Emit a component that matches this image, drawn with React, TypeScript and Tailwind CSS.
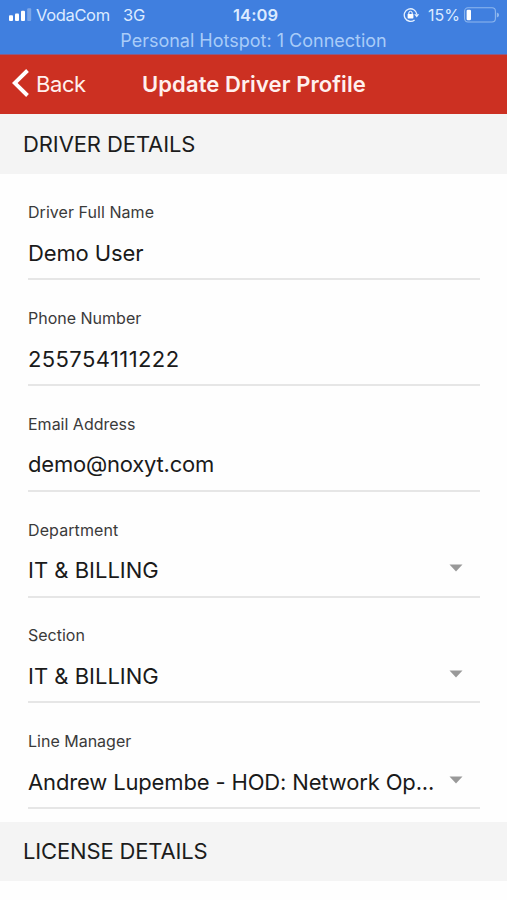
import { clsx } from "clsx";

type Field = {
  label: string;
  value: string;
  select?: boolean;
  labelClass?: string;
  valueClass?: string;
};

const fields: Field[] = [
  {
    label: "Driver Full Name",
    value: "Demo User",
    labelClass: "tracking-[0.05px]",
    valueClass: "tracking-[-0.12px]",
  },
  {
    label: "Phone Number",
    value: "255754111222",
    valueClass: "tracking-[0.4px]",
  },
  {
    label: "Email Address",
    value: "demo@noxyt.com",
    valueClass: "tracking-[-0.2px]",
  },
  {
    label: "Department",
    value: "IT & BILLING",
    select: true,
    labelClass: "tracking-[0.1px]",
  },
  { label: "Section", value: "IT & BILLING", select: true },
  {
    label: "Line Manager",
    value: "Andrew Lupembe - HOD: Network Op...",
    select: true,
    valueClass: "tracking-[-0.15px]",
  },
];

const SignalIcon = () => (
  <svg width="24" height="14" viewBox="0 0 24 14" fill="#fff">
    <rect x="0" y="7.2" width="4" height="5.8" rx="1" />
    <rect x="6" y="5.4" width="4" height="7.6" rx="1" />
    <rect x="12" y="2.8" width="4" height="10.2" rx="1" />
    <rect x="18.2" y="0.3" width="4" height="12.7" rx="1" opacity="0.3" />
  </svg>
);

const RotationLockIcon = () => (
  <svg width="17" height="16" viewBox="0 0 17 16" fill="none">
    <path
      d="M11.6 12.9A6.3 6.3 0 1 1 13.8 7.2"
      stroke="#e4f0ff"
      strokeWidth="1.3"
    />
    <path d="M11.2 7.2h5l-2.5 3.2z" fill="#e4f0ff" />
    <rect x="4.6" y="7" width="5.8" height="4.4" rx="0.6" fill="#fff" />
    <path d="M5.8 7.2V6a1.7 1.7 0 0 1 3.4 0v1.2" stroke="#fff" />
  </svg>
);

const BatteryIcon = () => (
  <svg width="36" height="16" viewBox="0 0 36 16" fill="none">
    <rect
      x="0.6"
      y="0.8"
      width="30.8"
      height="14.2"
      rx="3.4"
      stroke="#8fb8ee"
      strokeWidth="1.1"
    />
    <rect x="2.6" y="2.8" width="4.4" height="10.4" rx="1.2" fill="#fff" />
    <path d="M32.8 5.4c1.6.4 2.2 1.2 2.2 2.5s-.6 2.1-2.2 2.5z" fill="#8fb8ee" />
  </svg>
);

const StatusBar = () => (
  <div className="h-[55px] shrink-0 bg-[#407fdf] border-b border-[#8b5a85] text-[#dcebff]">
    <div className="flex h-[30px] items-center">
      <div className="flex w-[233px] items-center pl-[9px]">
        <SignalIcon />
        <span className="ml-[3px] w-[87px] text-[16.5px] tracking-[-0.35px]">
          VodaCom
        </span>
        <span className="text-[16.5px] tracking-[-0.3px]">3G</span>
      </div>
      <span className="w-[170px] text-[16.5px] font-semibold tracking-[0.1px]">
        14:09
      </span>
      <RotationLockIcon />
      <span className="ml-2 w-[36px] text-[16px]">15%</span>
      <BatteryIcon />
    </div>
    <p className="text-center text-[18px] leading-[22px] text-[#a9ccf8]">
      Personal Hotspot: 1 Connection
    </p>
  </div>
);

const Header = () => (
  <header className="flex h-[59px] shrink-0 items-center bg-[#cc3022] text-[#fff0ee]">
    <button className="flex w-[142px] items-center pl-3">
      <svg
        width="17"
        height="28"
        viewBox="0 0 17 28"
        fill="none"
        className="-mt-[3px]"
      >
        <path d="M15.5 1.5 2.7 14l12.8 12.5" stroke="#fff" strokeWidth="3.9" />
      </svg>
      <span className="ml-[7px] text-[22px] tracking-[-0.4px]">Back</span>
    </button>
    <h1 className="text-[22px] font-semibold tracking-[0.1px] whitespace-nowrap">
      Update Driver Profile
    </h1>
  </header>
);

const SectionTitle: React.FC<{ title: string; className?: string }> = ({
  title,
  className,
}) => (
  <h2
    className={clsx(
      "flex shrink-0 items-center bg-[#f4f4f4] pl-[23px] text-[22px] text-[#1c1c1c]",
      className,
    )}
  >
    {title}
  </h2>
);

const FormField: React.FC<{ field: Field }> = ({ field }) => (
  <div className="mr-[27px] ml-7 h-[105.8px] shrink-0 border-b-2 border-[#e6e6e6] pt-[27.8px]">
    <p
      className={clsx(
        "h-5 text-[16px] leading-5 text-[#3a3a3a]",
        field.labelClass,
      )}
    >
      {field.label}
    </p>
    <div className="mt-[17.2px] flex h-7 items-center justify-between pr-[17px]">
      <span
        className={clsx(
          "text-[22px] whitespace-nowrap text-[#1a1a1a]",
          field.valueClass,
        )}
      >
        {field.value}
      </span>
      {field.select && (
        <svg
          width="14"
          height="8"
          viewBox="0 0 14 8"
          className="-mt-[5px] shrink-0"
        >
          <path d="M0.5 0.5h13L7 7.5z" fill="#999" />
        </svg>
      )}
    </div>
  </div>
);

export default function App() {
  return (
    <div className="flex h-[900px] w-[507px] flex-col overflow-hidden bg-[#fefefe] font-['Inter',sans-serif]">
      <StatusBar />
      <Header />
      <SectionTitle
        title="DRIVER DETAILS"
        className="h-[60px] tracking-[-0.1px]"
      />
      <form className="mt-[0.4px] mb-[12.8px] flex shrink-0 flex-col">
        {fields.map((field) => (
          <FormField key={field.label} field={field} />
        ))}
      </form>
      <SectionTitle
        title="LICENSE DETAILS"
        className="h-[59px] tracking-[-0.15px]"
      />
    </div>
  );
}
